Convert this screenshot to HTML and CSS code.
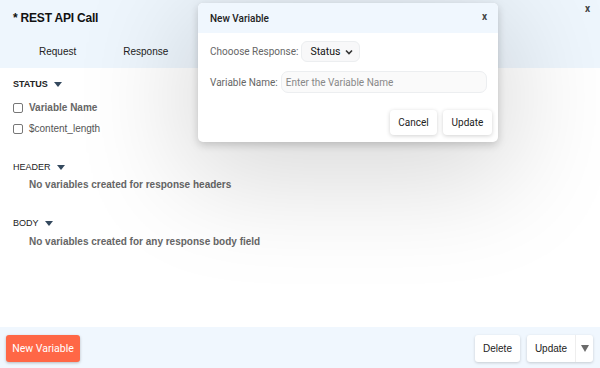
FILE: index.html
```html
<!DOCTYPE html>
<html>
<head>
<meta charset="utf-8">
<link rel="stylesheet" href="styles.css">
</head>
<body>
<div class="app">
  <div class="top">
    <div class="title-row">
      <div class="title">* REST API Call</div>
      <div class="close-main">x</div>
    </div>
    <div class="tabs">
      <div class="tab">Request</div>
      <div class="tab">Response</div>
    </div>
  </div>
  <div class="content">
    <div class="sec-title first bold">STATUS <span class="tri"></span></div>
    <label class="row r1"><span class="cb"></span><span class="lbl bold">Variable Name</span></label>
    <label class="row r2"><span class="cb"></span><span class="lbl">$content_length</span></label>
    <div class="sec-title sec">HEADER <span class="tri"></span></div>
    <div class="empty">No variables created for response headers</div>
    <div class="sec-title sec">BODY <span class="tri"></span></div>
    <div class="empty e2">No variables created for any response body field</div>
  </div>
  <div class="footer">
    <button class="btn-primary">New Variable</button>
    <div class="right-btns">
      <button class="btn-white del">Delete</button>
      <div class="split">
        <span class="split-main">Update</span>
        <span class="split-arrow"><span class="tri gray"></span></span>
      </div>
    </div>
  </div>
</div>

<div class="dialog">
  <div class="dlg-head">
    <span class="dlg-title">New Variable</span>
    <span class="dlg-close">x</span>
  </div>
  <div class="dlg-body">
    <div class="field">
      <span class="flabel">Chooose Response:</span>
      <div class="select">
        <span>Status</span>
        <svg width="8" height="6" viewBox="0 0 8 6"><path d="M1 1.5 L4 4.5 L7 1.5" fill="none" stroke="#333" stroke-width="1.6"/></svg>
      </div>
    </div>
    <div class="field f2">
      <span class="flabel">Variable Name:</span>
      <div class="input">Enter the Variable Name</div>
    </div>
    <div class="dlg-actions">
      <button class="dbtn cancel">Cancel</button>
      <button class="dbtn update">Update</button>
    </div>
  </div>
</div>
</body>
</html>
```

FILE: styles.css
```css
html, body {
  margin: 0;
  padding: 0;
}
body {
  width: 600px;
  height: 368px;
  overflow: hidden;
  position: relative;
  background: #ffffff;
  font-family: "Liberation Sans", Arial, sans-serif;
  color: #222;
}
.app {
  display: flex;
  flex-direction: column;
  height: 368px;
}
.top {
  height: 68px;
  background: #eef6fd;
  box-sizing: border-box;
}
.title-row {
  display: flex;
  justify-content: space-between;
  padding: 11px 10px 0 13px;
}
.title {
  font-size: 12px;
  font-weight: bold;
  line-height: 14px;
  color: #111;
  letter-spacing: -0.2px;
}
.close-main {
  font-family: "Roboto", sans-serif;
  font-size: 10px;
  font-weight: bold;
  line-height: 10px;
  color: #444;
  margin-top: -7px;
}
.tabs {
  display: flex;
  gap: 47px;
  padding: 21px 0 0 39px;
}
.tab {
  font-size: 10px;
  line-height: 12px;
  color: #222;
}
.content {
  flex: 1;
  padding: 0 13px;
}
.sec-title {
  font-size: 9px;
  line-height: 12px;
  color: #222;
  display: flex;
  align-items: center;
}
.sec-title.first {
  margin-top: 10px;
}
.sec-title.sec {
  margin-top: 26px;
}
.bold {
  font-weight: bold;
}
.tri {
  display: inline-block;
  width: 0;
  height: 0;
  border-left: 4px solid transparent;
  border-right: 4px solid transparent;
  border-top: 5px solid #34495e;
  margin-left: 6px;
}
.tri.gray {
  border-left-width: 4.5px;
  border-right-width: 4.5px;
  border-top: 7px solid #6b6b6b;
  margin-left: 0;
}
.row {
  display: flex;
  align-items: center;
  line-height: 12px;
  font-size: 10px;
  color: #555;
}
.row.r1 {
  margin-top: 12px;
}
.row.r2 {
  margin-top: 9px;
}
.cb {
  width: 8px;
  height: 8px;
  border: 1px solid #777;
  border-radius: 2px;
  background: #fff;
  margin-right: 6px;
}
.lbl.bold {
  color: #666;
}
.empty {
  font-size: 10px;
  font-weight: bold;
  line-height: 12px;
  color: #666;
  padding-left: 16px;
  margin-top: 6px;
}
.empty.e2 {
  margin-top: 7px;
}
.footer {
  height: 41px;
  background: #f0f7fe;
  display: flex;
  justify-content: space-between;
  align-items: flex-start;
  padding: 8px 7px 0 6px;
  box-sizing: border-box;
}
button {
  font: inherit;
  border: none;
  cursor: pointer;
}
.btn-primary {
  width: 74px;
  height: 27px;
  background: #ff6746;
  color: #fff;
  font-family: "Roboto", sans-serif;
  font-size: 10.5px;
  font-weight: 400;
  border-radius: 3px;
  box-shadow: 0 1px 3px rgba(0,0,0,0.25);
  padding: 0;
}
.right-btns {
  display: flex;
  gap: 7px;
}
.btn-white {
  height: 27px;
  background: #fff;
  border-radius: 3px;
  box-shadow: 0 1px 3px rgba(0,0,0,0.18);
  font-size: 10px;
  color: #222;
  padding: 0;
}
.del {
  width: 45px;
}
.split {
  width: 66px;
  height: 27px;
  background: #fff;
  border-radius: 3px;
  box-shadow: 0 1px 3px rgba(0,0,0,0.18);
  display: flex;
  align-items: center;
  font-size: 10px;
  color: #222;
}
.split-main {
  width: 48px;
  text-align: center;
}
.split-arrow {
  flex: 1;
  height: 27px;
  border-left: 1px solid #eee;
  display: flex;
  align-items: center;
  justify-content: center;
}
.dialog {
  position: absolute;
  left: 198px;
  top: 3px;
  width: 300px;
  height: 139px;
  background: #fff;
  border-radius: 5px;
  box-shadow: 0 25px 110px 15px rgba(0,0,0,0.15), 0 3px 8px rgba(0,0,0,0.18);
  font-family: "Roboto", sans-serif;
  overflow: hidden;
}
.dlg-head {
  height: 30px;
  background: #f0f7fe;
  display: flex;
  align-items: center;
  justify-content: space-between;
  padding: 0 11px 0 12px;
}
.dlg-title {
  font-size: 10px;
  font-weight: 500;
  color: #222;
}
.dlg-close {
  font-size: 10px;
  font-weight: bold;
  color: #444;
  margin-top: -4px;
}
.dlg-body {
  padding: 8px 6px 0 12px;
}
.field {
  display: flex;
  align-items: center;
  gap: 3px;
}
.field.f2 {
  margin-top: 9px;
}
.flabel {
  font-size: 10px;
  color: #666;
}
.select {
  width: 59px;
  height: 21px;
  box-sizing: border-box;
  background: #f8f8f9;
  border: 1px solid #eceef0;
  border-radius: 6px;
  display: flex;
  align-items: center;
  justify-content: space-between;
  padding: 0 6px 0 8px;
  font-size: 10.5px;
  font-weight: 400;
  color: #111;
}
.input {
  width: 206px;
  height: 22px;
  box-sizing: border-box;
  background: #fafafa;
  border: 1px solid #eceef0;
  border-radius: 7px;
  display: flex;
  align-items: center;
  padding-left: 4px;
  font-size: 10px;
  color: #888;
}
.dlg-actions {
  display: flex;
  justify-content: flex-end;
  gap: 6px;
  margin-top: 17px;
}
.dbtn {
  height: 25px;
  background: #fff;
  border-radius: 4px;
  box-shadow: 0 1px 4px rgba(0,0,0,0.18);
  font-family: "Roboto", sans-serif;
  font-size: 10px;
  color: #222;
  padding: 0;
}
.cancel {
  width: 47px;
}
.update {
  width: 49px;
}
```
